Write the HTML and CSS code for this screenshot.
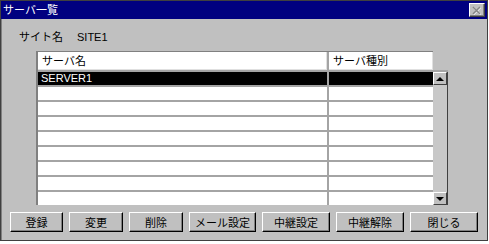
FILE: index.html
```html
<!DOCTYPE html>
<html>
<head>
    <title>サーバ一覧</title>
    <meta charset="utf-8">
    <link rel="stylesheet" href="styles.css">
</head>
<body>
    <div class="window">
        <div class="titlebar">
            <span class="title">サーバ一覧</span>
            <button class="close-btn">
                <svg width="10" height="9" viewBox="0 0 10 9">
                    <path d="M1.5 1.5 L8.5 8.5 M8.5 1.5 L1.5 8.5" stroke="#ffffff" stroke-width="1.6"/>
                    <path d="M1 1 L8 8 M8 1 L1 8" stroke="#868686" stroke-width="1.6"/>
                </svg>
            </button>
        </div>
        <div class="content">
            <div class="site">
                <span class="site-label">サイト名</span>
                <span class="site-value">SITE1</span>
            </div>
            <div class="grid">
                <div class="cell head">サーバ名</div>
                <div class="cell head">サーバ種別</div>
                <div class="head-blank"></div>

                <div class="cell selected">SERVER1</div>
                <div class="cell selected"></div>
                <div class="scrollbar">
                    <div class="scroll-btn"><span class="arrow-up"></span></div>
                    <div class="scroll-track"></div>
                    <div class="scroll-btn"><span class="arrow-down"></span></div>
                </div>

                <div class="cell"></div><div class="cell"></div>
                <div class="cell"></div><div class="cell"></div>
                <div class="cell"></div><div class="cell"></div>
                <div class="cell"></div><div class="cell"></div>
                <div class="cell"></div><div class="cell"></div>
                <div class="cell"></div><div class="cell"></div>
                <div class="cell"></div><div class="cell"></div>
                <div class="cell"></div><div class="cell"></div>
            </div>
            <div class="buttons">
                <button class="btn btn-small">登録</button>
                <button class="btn btn-mid">変更</button>
                <button class="btn btn-mid">削除</button>
                <button class="btn btn-mail">メール設定</button>
                <button class="btn btn-wide">中継設定</button>
                <button class="btn btn-wide">中継解除</button>
                <button class="btn btn-wide">閉じる</button>
            </div>
        </div>
    </div>
</body>
</html>
```

FILE: styles.css
```css
body {
    margin: 0;
    background-color: #ffffff;
    font-family: "Liberation Sans", "Noto Sans CJK JP", sans-serif;
    font-size: 11px;
    color: #000000;
}

.window {
    width: 488px;
    height: 241px;
    box-sizing: border-box;
    background-color: #c0c0c0;
    border: 1px solid #404040;
    box-shadow: inset 1px 1px 0 #808080;
    display: flex;
    flex-direction: column;
}

.titlebar {
    height: 18px;
    background-color: #000080;
    display: flex;
    align-items: center;
    justify-content: space-between;
    padding: 0 2px 0 2px;
}

.title {
    color: #ffffff;
    font-size: 11px;
    line-height: 14px;
}

.close-btn {
    width: 16px;
    height: 14px;
    padding: 0;
    margin: 0;
    background-color: #c0c0c0;
    border: 1px solid;
    border-color: #ffffff #404040 #404040 #ffffff;
    box-shadow: inset -1px -1px 0 #808080;
    display: flex;
    align-items: center;
    justify-content: center;
}

.content {
    padding: 11px 0 0 18px;
}

.site {
    display: flex;
    line-height: 14px;
    height: 14px;
}

.site-value {
    margin-left: 14px;
}

.grid {
    margin: 7px 0 0 17px;
    width: 410px;
    display: grid;
    grid-template-columns: 289px 104px 13px;
    grid-template-rows: 18px repeat(9, 13px);
    gap: 2px 2px;
    border-left: 2px solid #808080;
    border-top: 1px solid #808080;
    background-color: #a4a4a4;
}

.cell {
    background-color: #ffffff;
    line-height: 13px;
    padding-left: 3px;
    white-space: nowrap;
    overflow: hidden;
}

.cell.head {
    line-height: 18px;
    padding-left: 4px;
    box-shadow: inset -1px -1px 0 #e0e0e0;
}

.head-blank {
    background-color: #c0c0c0;
    margin-left: -2px;
    margin-right: -1px;
    margin-top: -1px;
}

.cell.selected {
    background-color: #000000;
    color: #ffffff;
}

.scrollbar {
    grid-row: 2 / span 9;
    grid-column: 3;
    margin-left: -2px;
    display: flex;
    flex-direction: column;
    background-color: #c8c8c8;
    border-right: 1px solid #404040;
}

.scroll-track {
    flex: 1;
}

.scroll-btn {
    height: 13px;
    box-sizing: border-box;
    background-color: #c0c0c0;
    border: 1px solid;
    border-color: #ffffff #404040 #404040 #ffffff;
    display: flex;
    align-items: center;
    justify-content: center;
}

.arrow-up {
    width: 0;
    height: 0;
    border-left: 4px solid transparent;
    border-right: 4px solid transparent;
    border-bottom: 4px solid #000000;
}

.arrow-down {
    width: 0;
    height: 0;
    border-left: 4px solid transparent;
    border-right: 4px solid transparent;
    border-top: 4px solid #000000;
}

.buttons {
    display: flex;
    gap: 6px;
    margin: 7px 0 0 -9px;
}

.btn {
    height: 20px;
    padding: 0;
    font-family: "Noto Sans CJK JP", sans-serif;
    font-size: 11px;
    color: #000000;
    background-color: #c0c0c0;
    border: 1px solid;
    border-color: #ffffff #000000 #000000 #ffffff;
    box-shadow: inset -1px -1px 0 #808080;
}

.btn-small {
    width: 53px;
}

.btn-mid {
    width: 54px;
}

.btn-mail {
    width: 67px;
}

.btn-wide {
    width: 68px;
}
```
